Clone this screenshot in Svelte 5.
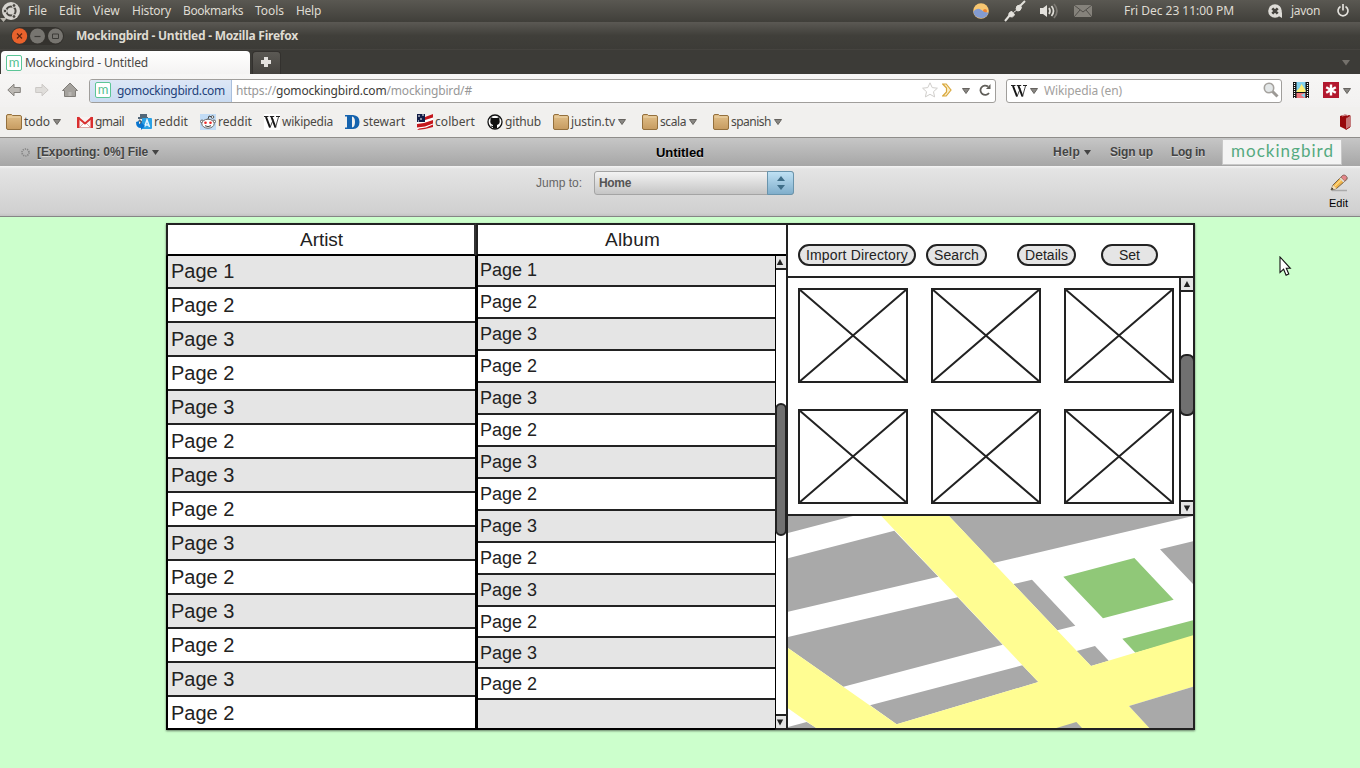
<script>
  const menus = [['File', 19], ['Edit', 22], ['View', 27], ['History', 39], ['Bookmarks', 60], ['Tools', 29], ['Help', 25]];
  const bookmarks = [
    ['folder', 'todo', 26], ['gmail', 'gmail', 29], ['translate', 'reddit', 34], ['alien', 'reddit', 34],
    ['wiki', 'wikipedia', 51], ['stewart', 'stewart', 42], ['flag', 'colbert', 40], ['github', 'github', 36],
    ['folder', 'justin.tv', 44], ['folder', 'scala', 26], ['folder', 'spanish', 40]
  ];
  const artists = Array.from({ length: 14 }, (_, i) => (i === 0 ? 'Page 1' : i % 2 ? 'Page 2' : 'Page 3'));
  const albums = [...artists, ''];
  const actions = [['Import Directory', 'import', 102], ['Search', 'search', 45], ['Details', 'details', 43], ['Set', 'set', 21]];

  // Spreads the letters so that the label fills its column exactly.
  function fit(node, width) {
    const natural = node.getBoundingClientRect().width;
    const count = node.textContent.length;
    node.style.letterSpacing = `${(width - natural) / count}px`;
  }
</script>

{#snippet label(text, width)}
  <span class="label" use:fit={width}>{text}</span>
{/snippet}

{#snippet arrow()}
  <svg class="arrow" width="8" height="6" viewBox="0 0 8 6"><path d="M.5.5h7L4 5.5z" fill="#898783" stroke="#66635f" /></svg>
{/snippet}

{#snippet icon(kind)}
  <svg class="ico" width="16" height="16" viewBox="0 0 16 16">
    {#if kind === 'folder'}
      <defs><linearGradient id="fold" x2="0" y2="1"><stop stop-color="#e2c08a" /><stop offset="1" stop-color="#c69b60" /></linearGradient></defs>
      <path d="M.5 14V2q0-1.500 1.500-1.500h3.500l1 1H14q1.500 0 1.500 1.500v11q0 1.500-1.500 1.500H2Q.5 15.500.5 14z" fill="url(#fold)" stroke="#94703d" />
      <path d="M1.500 3h13" stroke="#edd5a9" />
    {:else if kind === 'gmail'}
      <path d="M0 3h16v11H0z" fill="#f8f3f2" /><path d="M2.500 13.500L7 9h2l4.500 4.500z" fill="#fff" stroke="#dda9a6" />
      <path d="M0 3h2.500v11H0zM13.500 3H16v11h-2.500z" fill="#d92f2f" /><path d="M1 3.500l7 6 7-6" fill="none" stroke="#d92f2f" stroke-width="2" />
    {:else if kind === 'translate'}
      <path d="M4 0h7v3H4zM2 3h10v2H2z" fill="#526779" /><path d="M3 6l7 6M9 5L3 12" stroke="#526779" stroke-width="2" />
      <rect x="6" y="4" width="10" height="11" rx="1" fill="#2aa1e5" />
      <path d="M8.500 13L11 6l2.500 7M9.500 11h3" stroke="#e8f6ff" stroke-width="1.500" fill="none" />
      <path d="M0 8l3-1v3h2V8l4 4-4 4v-2Q0 14 0 8z" fill="#0874cf" />
    {:else if kind === 'alien'}
      <path d="M0 0h16v16H0z" fill="#c2dcf6" />
      <path d="M8 5l1-3 3 1" fill="none" stroke="#444" /><circle cx="12.500" cy="3" r="1.300" fill="#fff" stroke="#555" />
      <circle cx="2" cy="7.500" r="1.500" fill="#fff" stroke="#666" /><circle cx="14" cy="7.500" r="1.500" fill="#fff" stroke="#666" />
      <ellipse cx="8" cy="9.700" rx="6.200" ry="4.500" fill="#fff" stroke="#666" />
      <circle cx="5.500" cy="8.700" r="1.300" fill="#ed2929" /><circle cx="10.500" cy="8.700" r="1.300" fill="#ed2929" />
      <path d="M5 11.700q3 1.800 6 0" fill="none" stroke="#444" />
    {:else if kind === 'wiki'}
      <path d="M0 0h16v16H0z" fill="#fff" />
      <path d="M2 3l4 10.500M7.500 3l4 10.500" stroke="#151515" stroke-width="2" />
      <path d="M6 13.500L9.300 5.500M11.500 13.500L14.500 3" stroke="#333" stroke-width=".9" />
      <path d="M0 2.500h4.500M5.800 2.500h4.400M12 2.500h4" stroke="#222" />
    {:else if kind === 'stewart'}
      <path fill-rule="evenodd" d="M0 1h8q6.500.5 6.500 7T8 15H0v-1.500h2V2.500H0zM7 2.500v11q3-.5 3-5.500T7 2.500z" fill="#1563ae" />
    {:else if kind === 'flag'}
      <path d="M0 3l8-1 8-2v12l-8 2-8 2z" fill="#fff" />
      <path d="M8 3l8-3v3.500L8 6zM0 10l7-1 9-3v3.500l-8 3-8 1zM2 14.500l7-1 7-3v2.500l-8 2-8 1z" fill="#c4171d" />
      <path d="M0 0h8v8H0z" fill="#111c46" /><path d="M1 2h2M5 1h2M3 5h2M1 7h1" stroke="#fff" stroke-width="1.200" />
    {:else if kind === 'github'}
      <circle cx="8" cy="8" r="7" fill="#fff" stroke="#111" stroke-width="1.300" />
      <path d="M3.500 3l2.500 1h4l2.500-1v3q1 4-2.500 5v3.500H6V13q-2 0-2.500-1.500l2.500.5v-1Q2.500 10 3.500 6z" fill="#111" />
    {/if}
  </svg>
{/snippet}

{#snippet bar(cls)}
  <div class="scroll {cls}">
    <div class="sbtn"><svg width="8" height="7"><path d="M4 0l3.200 6H.8z" fill="#222" /></svg></div>
    <div class="track"><div class="thumb"></div></div>
    <div class="sbtn low"><svg width="8" height="7"><path d="M.8.500h6.400L4 6.500z" fill="#222" /></svg></div>
  </div>
{/snippet}

<div class="screen">
  <div class="panel">
    <svg class="ubuntu" width="20" height="22" viewBox="0 0 20 22">
      <circle cx="11" cy="11" r="9" fill="#d6d4cf" />
      <circle cx="11" cy="11" r="4.600" fill="none" stroke="#4a4843" stroke-width="2" />
      <path d="M11 11L4 11M11 11l4-7M11 11l4 7" stroke="#d6d4cf" stroke-width="1.200" />
      <circle cx="5" cy="11" r="1.900" fill="#4a4843" stroke="#d6d4cf" /><circle cx="14" cy="5.500" r="1.900" fill="#4a4843" stroke="#d6d4cf" /><circle cx="14" cy="16.500" r="1.900" fill="#4a4843" stroke="#d6d4cf" />
      <path d="M0 18h7l-3.500 4z" fill="#b8b5ad" />
    </svg>
    <nav>{#each menus as [text, w]}{@render label(text, w)}{/each}</nav>
    <div class="tray">
      <svg width="16" height="16" viewBox="0 0 16 16"><circle cx="8" cy="8" r="7.800" fill="#f7c671" /><circle cx="12" cy="8" r="2" fill="#ef8432" /><path d="M.3 8.500Q4 4 8.500 7q3 3 7 2.500A7.800 7.800 0 0 1 .3 8.500z" fill="#839bd0" /></svg>
      <svg class="plug" width="22" height="22" viewBox="0 0 22 22"><path d="M1 21l5-6M16 6l5-5" stroke="#e3e1dc" stroke-width="2" /><path d="M5 16q-1-4 3-4.500l2.500 3q-1.500 4-5.500 1.500zM12 9q0-4 4-4l1.500 2.500q-1 4-4 3.500zM9.500 12.500l4-3" fill="#e3e1dc" stroke="#e3e1dc" /></svg>
      <svg class="vol" width="20" height="16" viewBox="0 0 20 16"><path d="M1 5h3l4-3v12l-4-3H1z" fill="#e3e1dc" /><path d="M10 5q2 3 0 6M12.500 3q4 5 0 10" fill="none" stroke="#dfddd7" stroke-width="1.700" /><path d="M15 1q6 7 0 14" fill="none" stroke="#7c7973" stroke-width="1.700" /></svg>
      <svg class="mail" width="18" height="12" viewBox="0 0 18 12"><path d="M0 0h18v12H0z" fill="#85827b" /><path d="M0 0l9 7 9-7M0 12l6-7M18 12l-6-7" fill="none" stroke="#504e49" /></svg>
      <span class="clock">{@render label('Fri Dec 23 11:00 PM', 110)}</span>
      <svg class="chat" width="15" height="15" viewBox="0 0 15 15"><circle cx="7" cy="7" r="6.800" fill="#dedcd7" /><path d="M9 11l5 3V8z" fill="#dedcd7" /><path d="M4.300 4.300l5.400 5.400M9.700 4.300l-5.400 5.400" stroke="#44423d" stroke-width="2.600" /></svg>
      {@render label('javon', 29)}
      <svg class="power" width="14" height="14" viewBox="0 0 14 14"><path d="M4.500 2.500a5 5 0 1 0 5 0M7 0v6.500" fill="none" stroke="#e3e1dc" stroke-width="1.700" /></svg>
    </div>
  </div>

  <div class="title">
    <svg width="60" height="20" viewBox="0 0 60 20">
      <rect x="1" y="1" width="53" height="18" rx="9" fill="#34322e" />
      <circle cx="9.500" cy="10" r="7.700" fill="#e9622c" /><circle cx="27.500" cy="10" r="7.500" fill="#777570" /><circle cx="45.500" cy="10" r="7.500" fill="#777570" />
      <path d="M7 7.500l5 5M12 7.500l-5 5" stroke="#5d2410" stroke-width="1.200" /><path d="M24.500 10.500h6" stroke="#3c3b37" stroke-width="1.200" /><path d="M42.500 8h6v4.500h-6z" fill="none" stroke="#3c3b37" />
    </svg>
    {@render label('Mockingbird - Untitled - Mozilla Firefox', 222)}
  </div>

  <div class="tabs">
    <div class="tab"><span class="m">m</span>{@render label('Mockingbird - Untitled', 123)}</div>
    <div class="plus"><svg width="12" height="12"><path d="M4 1h4v3h3v4H8v3H4V8H1V4h3z" fill="#e4e2df" /></svg></div>
    <svg class="more" width="8" height="6"><path d="M0 0h8L4 5.500z" fill="#74716b" /></svg>
  </div>

  <div class="nav">
    <svg class="back" width="14" height="14" viewBox="0 0 14 14"><path d="M.8 7L7 1.200V4.500h6.300v5H7v3.300z" fill="#bbb8b3" stroke="#85827d" /></svg>
    <svg class="fwd" width="14" height="14" viewBox="0 0 14 14"><path d="M13.200 7L7 1.200V4.500H.7v5H7v3.300z" fill="#dfddda" stroke="#cbc8c5" /></svg>
    <svg class="home" width="16" height="16" viewBox="0 0 16 16"><path d="M8 1l7.500 7.500H13.500v6h-11v-6H.5z" fill="#a5a29d" stroke="#807d78" /><path d="M6.500 10h3v4h-3z" fill="#b9b6b2" /></svg>
    <div class="url">
      <div class="site"><span class="m">m</span>{@render label('gomockingbird.com', 108)}</div>
      <div class="addr"><span class="label" use:fit={236}>https://<b>gomockingbird.com</b>/mockingbird/#</span></div>
      <svg class="star" width="16" height="16" viewBox="0 0 16 16"><path d="M8 .8l2.200 4.800 5.200.6-3.900 3.500 1.100 5.200L8 12.300l-4.600 2.600 1.100-5.200L.6 6.200l5.200-.6z" fill="#fff" stroke="#cfcdca" /></svg>
      <svg class="rss" width="10" height="14" viewBox="0 0 10 14"><path d="M.7 1h3.500L9 7l-4.800 6H.7L4.500 9V5z" fill="#fbedc4" stroke="#d8a73d" stroke-width="1.200" /></svg>
      <span class="uarr">{@render arrow()}</span>
      <svg class="reload" width="12" height="12" viewBox="0 0 12 12"><path d="M10 9A4.700 4.700 0 1 1 9 2.500" fill="none" stroke="#605e59" stroke-width="1.800" /><path d="M11.500 0v5H7z" fill="#605e59" /></svg>
    </div>
    <div class="searchbox">
      {@render icon('wiki')}<span class="sarr">{@render arrow()}</span>{@render label('Wikipedia (en)', 78)}
      <svg class="mag" width="16" height="16" viewBox="0 0 16 16"><path d="M9 9l5.500 5.500" stroke="#9c9995" stroke-width="3" /><circle cx="6" cy="6" r="4.700" fill="#e3e7e8" stroke="#a5a29e" stroke-width="1.600" /></svg>
    </div>
    <svg class="film" width="16" height="16" viewBox="0 0 16 16"><path d="M0 0h16v16H0z" fill="#111" /><path d="M3.500 0h9v10h-9z" fill="#83d2ef" /><path d="M3.500 9l3-3 2-4 4 6v2h-9z" fill="#fff176" /><path d="M3.500 11h9v5h-9z" fill="#f0767d" /><path d="M8 13l4-2v5z" fill="#83d2ef" /><path d="M1.500 1v15M14.500 1v15" stroke="#fff" stroke-width="1.200" stroke-dasharray="1 1" /></svg>
    <svg class="pass" width="16" height="16" viewBox="0 0 16 16"><path d="M0 0h16v16H0z" fill="#b3182e" /><path d="M8 2.500v11M3.200 5.200l9.600 5.600M12.800 5.200l-9.600 5.600" stroke="#fff" stroke-width="2.400" /></svg>
    {@render arrow()}
  </div>

  <div class="marks">
    {#each bookmarks as [kind, text, w]}
      <div class="mark" class:folder={kind === 'folder'}>{@render icon(kind)}{@render label(text, w)}{#if kind === 'folder'}{@render arrow()}{/if}</div>
    {/each}
    <svg class="book" width="12" height="16" viewBox="0 0 12 16"><path d="M1 2l5-1.500 5 1L7 4v11.500l-6-3z" fill="#98080c" /><path d="M7 4l4-2.500v11.500l-4 2.500z" fill="#f5e7e5" stroke="#98080c" /><path d="M9 3v11" stroke="#98080c" /><path d="M3 2l4-1 2 .5" fill="none" stroke="#f0d8d8" stroke-width=".7" /></svg>
  </div>

  <header>
    <svg class="spin" width="9" height="9"><circle cx="4.500" cy="4.500" r="3.500" fill="none" stroke="#858585" stroke-width="1.700" stroke-dasharray="1.200 1" /></svg>
    <div class="file">{@render label('[Exporting: 0%] File', 111)}<svg width="7" height="5"><path d="M0 0h7L3.500 5z" fill="#444" /></svg></div>
    <h1>{@render label('Untitled', 48)}</h1>
    <div class="links">
      <span class="help">{@render label('Help', 27)}<svg width="7" height="5"><path d="M0 0h7L3.500 5z" fill="#444" /></svg></span>
      {@render label('Sign up', 43)}
      <span class="login">{@render label('Log in', 34)}</span>
      <span class="logo">{@render label('mockingbird', 103)}</span>
    </div>
  </header>

  <div class="tools">
    <span class="jump">{@render label('Jump to:', 46)}</span>
    <div class="select"><span>{@render label('Home', 34)}</span><i><svg width="8" height="14"><path d="M0 5h8L4 0zM0 9h8L4 14z" fill="#3f6e88" /></svg></i></div>
    <div class="edit">
      <svg width="18" height="18" viewBox="0 0 18 18"><path d="M2 16.500h15" stroke="#aaa" stroke-width="1.500" /><path d="M1 16l2-5L12.500 1.500q1.500-1 3.500.7t.8 3.300L6.500 14.500z" fill="#f0b44a" stroke="#75624a" /><path d="M11 3l2-1.700q2-.5 3.200.7t.4 3L14.500 7z" fill="#e5858a" stroke="#8f6b6b" stroke-width=".7" /><path d="M10 4l4 3.800" stroke="#ddd" stroke-width="1.700" /><path d="M3 11l3.500 3.500L1 16z" fill="#f3dfb9" /><path d="M1 16l1-2.500 1.500 1.700z" fill="#222" /><path d="M5 12l6-6" stroke="#ffda83" stroke-width="1.300" /></svg>
      {@render label('Edit', 19)}
    </div>
  </div>

  <main>
    <div class="wire">
      <section class="artist">
        <h2>{@render label('Artist', 43)}</h2>
        <ul>{#each artists as a}<li>{a}</li>{/each}</ul>
      </section>
      <section class="album">
        <h2>{@render label('Album', 55)}</h2>
        <div class="split">
          <ul>{#each albums as a}<li>{a}</li>{/each}</ul>
          {@render bar('narrow')}
        </div>
      </section>
      <section class="detail">
        <div class="buttons">{#each actions as [text, cls, w]}<button class={cls}>{@render label(text, w)}</button>{/each}</div>
        <div class="gallery">
          <div class="pics">
            {#each Array(6) as _}
              <svg viewBox="0 0 110 95" width="110" height="95"><path d="M1 1h108v93H1zL109 94M109 1L1 94" fill="#fff" stroke="#222" stroke-width="2" /></svg>
            {/each}
          </div>
          {@render bar('wide')}
        </div>
        <svg class="map" viewBox="24 18 1215 636" width="405" height="212" preserveAspectRatio="none">
          <path d="M24 18h1215v636H24z" fill="#fff" />
          <path d="M24 18H219L24 69zM24 145L343 62 475 200 24 305zM24 381L533 262 668 404 190 530 24 414zM270 586L727 466 775 516 350 643zM507 18H1239L640 159zM1140 118L1239 94V222zM700 222L756 209 886 347 832 361zM890 423L945 408 986 452 933 468zM24 651L80 636 110 654H24z" fill="#a9a9a9" />
          <path d="M850 200L1063 144 1181 269 969 325zM1027 386L1239 331V380L1066 428z" fill="#90c878" />
          <path d="M304 18H507L933 468 1239 376V530L1047 588 1108 654H108L24 595V414L350 643 775 516z" fill="#fffd92" />
          <path d="M1047 588L1239 530V654H1108zM829 654L889 636 906 654z" fill="#a9a9a9" />
        </svg>
      </section>
    </div>
    <svg class="cursor" width="13" height="21" viewBox="0 0 13 21"><path d="M1 1v15.500l3.600-3.300 2.500 6 2.700-1.200-2.500-5.700h4z" fill="#fff" stroke="#111" stroke-width="1.100" /></svg>
  </main>
</div>

<style>
  :global(body) { margin: 0; }
  * { box-sizing: border-box; }
  svg { display: block; flex: none; }
  .screen { width: 1360px; height: 768px; overflow: hidden; font: 12px/16px "Noto Sans", "Open Sans", sans-serif; color: #4a4844; display: flex; flex-direction: column; }
  .label { display: inline-block; white-space: nowrap; flex: none; }
  .panel, .title, .tabs, .nav, .marks, header, .tools { display: flex; align-items: center; flex: none; }

  .panel { height: 22px; background: linear-gradient(#5a5852, #403f3a); color: #dfdbd2; padding-right: 10px; }
  .panel nav { display: flex; gap: 12px; margin-left: 8px; }
  .tray { margin-left: auto; display: flex; align-items: center; }
  .plug { margin-left: 15px; }
  .vol { margin-left: 13px; }
  .mail { margin-left: 15px; }
  .clock { margin-left: 32px; display: flex; }
  .chat { margin: 0 8px 0 34px; }
  .power { margin-left: 16px; }

  .title { height: 27px; background: linear-gradient(#5b5954, #403f3a 50%, #3c3b37); padding-left: 10px; color: #dfdbd2; font-weight: 700; gap: 6px; }
  .tabs { height: 25px; background: #3c3b37; border-top: 1px solid #45433f; padding-left: 1px; align-items: flex-end; }
  .tab { width: 249px; height: 23px; border-radius: 4px 4px 0 0; background: linear-gradient(#fff, #f4f3f2); display: flex; align-items: center; padding-left: 5px; gap: 3px; }
  .m { width: 16px; height: 16px; border: 1px solid #5cc596; border-radius: 2px; background: #fff; color: #56c291; font: 13px/12px Lato, sans-serif; display: flex; justify-content: center; flex: none; }
  .plus { width: 29px; height: 23px; margin-left: 2px; border-radius: 4px 4px 0 0; border: 1px solid #33312e; border-bottom: 0; background: linear-gradient(#5b5954, #45433f); display: flex; align-items: center; justify-content: center; padding: 0 1px 2px 0; }
  .more { margin: 0 10px 8px auto; }

  .nav { height: 33px; background: linear-gradient(#f7f6f5, #f2f1f0); padding-left: 7px; }
  .back, .fwd, .home { margin-top: -2px; }
  .fwd { margin-left: 14px; }
  .home { margin-left: 13px; }
  .url { width: 907px; height: 24px; margin-left: 11px; border: 1px solid #a09e9b; border-radius: 3px; background: #fff; display: flex; align-items: center; overflow: hidden; }
  .site { width: 142px; height: 22px; background: linear-gradient(#dde7f6, #c9dbf1); border-right: 1px solid #a9bfdc; color: #24427a; display: flex; align-items: center; padding-left: 5px; gap: 6px; }
  .site .m { margin-top: -2px; }
  .addr { width: 690px; padding-left: 4px; color: #979797; display: flex; }
  .addr b { font-weight: 400; color: #3c3b37; }
  .star { margin-top: -2px; }
  .rss { margin: -1px 0 0 4px; }
  .uarr { margin-left: 10px; }
  .reload { margin: -1px 0 0 9px; }
  .searchbox { width: 276px; height: 24px; margin-left: 10px; border: 1px solid #a09e9b; border-radius: 3px; background: #fff; color: #a2a09d; display: flex; align-items: center; padding: 0 2px 0 4px; }
  .sarr { margin: 0 6px 0 3px; }
  .mag { margin: -2px 0 0 auto; }
  .film { margin: -2px 0 0 11px; }
  .pass { margin: -2px 4px 0 14px; }

  .marks { height: 31px; background: #f1f0ee; border-bottom: 1px solid #8f8d8a; padding: 0 9px 0 6px; gap: 12px; }
  .mark { display: flex; align-items: center; gap: 2px; }
  .mark.folder { padding-right: 4px; }
  .mark .arrow { margin-left: 1px; }
  .book { margin: -1px 0 0 auto; }

  header { height: 28px; background: linear-gradient(#c6c6c6, #a6a6a6); padding: 0 18px 0 21px; font: bold 12px/14px "Liberation Sans", Arial, sans-serif; color: #444; text-shadow: 0 1px 0 #d8d8d8; }
  .file { display: flex; align-items: center; gap: 4px; margin-left: 7px; }
  h1 { font: bold 13px/14px "Liberation Sans", Arial, sans-serif; color: #000; margin: 1px 0 0 497px; display: flex; }
  .links { display: flex; align-items: center; margin-left: auto; height: 28px; }
  .help { display: flex; align-items: center; gap: 4px; margin-right: 19px; }
  .login { margin: 0 17px 0 18px; display: flex; }
  .logo { width: 120px; height: 26px; background: #f4f4f4; border: 1px solid #c8c8c8; color: #55aa80; font: 17px/22px Lato, sans-serif; padding-left: 8px; text-shadow: none; }

  .tools { height: 51px; align-items: flex-start; background: linear-gradient(#f4f4f4, #e4e4e4 3px, #d0d0d0 47px, #c3c3c3); border-bottom: 1px solid #858585; padding: 5px 12px 0 536px; font: 12px/14px "Liberation Sans", Arial, sans-serif; }
  .jump { color: #666; margin-top: 5px; display: flex; }
  .select { width: 200px; height: 24px; margin-left: 12px; border: 1px solid #a4a4a4; border-radius: 3px; background: linear-gradient(#f3f3f3, #c5c5c5); display: flex; justify-content: space-between; font-weight: 700; color: #555; }
  .select span { padding: 2px 0 0 2px; }
  .select i { width: 27px; height: 24px; margin: -1px; border: 1px solid #6994ac; border-radius: 0 3px 3px 0; background: linear-gradient(#bfe1f4, #80aecb); display: flex; align-items: center; justify-content: center; }
  .edit { margin: 3px 0 0 auto; display: flex; flex-direction: column; align-items: center; gap: 4px; font-size: 11px; color: #000; }

  main { flex: 1; background: #cfc; position: relative; padding: 6px 0 0 166px; font-family: "Liberation Sans", Arial, sans-serif; color: #222; }
  .wire { width: 1029px; height: 507px; display: flex; background: #fff; box-shadow: 0 1px 2px rgba(0, 0, 0, .5); }
  h2 { font-size: 19px; font-weight: 400; line-height: 29px; height: 33px; margin: 0; padding-left: 1px; border: 2px solid #222; border-bottom-color: #000; text-align: center; }
  ul { list-style: none; margin: 0; padding: 0; }
  li { border-bottom: 2px solid #222; background: #fff; }
  li:nth-child(odd) { background: #e5e5e5; }
  .artist { width: 310px; }
  .artist h2 { border-right-color: #333; }
  .artist ul { height: 474px; border: solid #000; border-width: 0 1px 2px 2px; overflow: hidden; }
  .artist li { height: 34px; font-size: 20px; line-height: 33px; padding-left: 3px; }
  .artist li:first-child { height: 33px; line-height: 31px; }
  .artist li:last-child { height: 31px; border: 0; }
  .album { width: 310px; }
  .album h2 { border-right: 0; }
  .split { display: flex; height: 474px; }
  .album ul { width: 299px; border: 2px solid #000; border-top: 0; border-right: 0; }
  .album li { height: 32px; font-size: 18px; line-height: 31px; padding-left: 2px; }
  .album li:first-child { height: 31px; line-height: 29px; }
  .album li:nth-child(n + 12) { height: 31px; }
  .album li:last-child { height: 28px; border: 0; }
  .detail { width: 409px; border: 2px solid #222; }
  .buttons { height: 53px; border-bottom: 2px solid #222; display: flex; padding: 19px 0 0 10px; }
  button { height: 22px; border: 2px solid #222; border-radius: 11px; background: #e5e5e5; color: #222; font: 14px/18px "Liberation Sans", Arial, sans-serif; padding: 0; }
  .import { width: 118px; }
  .search { width: 61px; margin-left: 10px; }
  .details { width: 59px; margin-left: 30px; }
  .set { width: 57px; margin-left: 25px; }
  .gallery { height: 238px; border-bottom: 2px solid #222; display: flex; }
  .pics { width: 391px; padding: 10px 0 0 10px; display: grid; grid-template-columns: repeat(3, 110px); column-gap: 22.800px; grid-auto-rows: 95px; row-gap: 26px; align-content: start; }
  .scroll { display: flex; flex-direction: column; border-left: 2px solid #222; }
  .sbtn { height: 14px; flex: none; background: #e5e5e5; border-bottom: 2px solid #222; display: flex; align-items: center; justify-content: center; }
  .low { border-bottom: 0; border-top: 2px solid #222; }
  .track { flex: 1; }
  .thumb { background: #707070; border: 2px solid #222; border-radius: 6px; }
  .narrow { width: 11px; border-left: 1px solid #000; border-bottom: 2px solid #222; }
  .narrow .sbtn { padding-right: 2px; }
  .narrow .thumb { height: 133px; margin: 133px -1px 0; }
  .wide { width: 14px; }
  .wide .thumb { height: 62px; margin: 62px -2px 0; border-radius: 7px; }
  .cursor { position: absolute; left: 1279px; top: 39px; }
</style>
